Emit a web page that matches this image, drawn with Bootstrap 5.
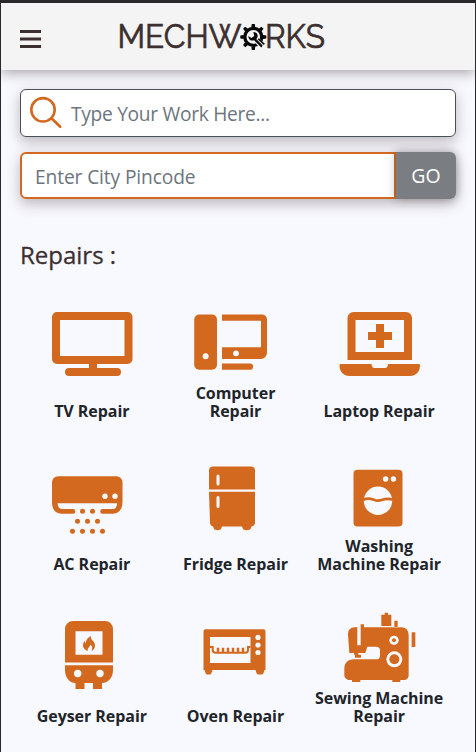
<!DOCTYPE html>
<html lang="en">
<head>
<meta charset="utf-8">
<meta name="viewport" content="width=device-width, initial-scale=1">
<title>Mechworks</title>
<link rel="stylesheet" href="https://cdn.jsdelivr.net/npm/bootstrap@5.3.0/dist/css/bootstrap.min.css">
<style>
:root{--brand:#d2691e;--ink:#3b2f2f}
body{font-family:"Open Sans","Noto Sans",sans-serif;background:#f8f9ff}
.app-frame{height:752px;border:solid #2a282a;border-width:3px 1px 0;overflow:hidden}
.top-bar{height:67px;background:#f4f4f4;box-shadow:0 3px 12px rgba(59,47,47,.42);padding:0 19px}
.menu-btn{line-height:0;margin-top:2px}
.logo-svg{margin-left:71px}
.logo-svg text{font-family:Raleway,Montserrat,Lato,sans-serif;font-size:33px;fill:var(--ink);stroke:var(--ink);stroke-width:.7}
.page-body{padding:19px 19px 0}
.soft-shadow{box-shadow:0 5px 14px rgba(59,47,47,.32)}
.search-box{height:48px;border:1px solid #495057;border-radius:6px;padding-left:9px}
.form-control,.form-control:focus{font-size:19.2px;box-shadow:none}
.form-control::placeholder{color:#6c757d}
.search-box .form-control{padding:2px 0 0 8px;letter-spacing:-.3px}
.pin-box{height:47px;margin-top:15px;border-radius:6px}
.pin-box .form-control{border:2px solid var(--brand);border-radius:6px 0 0 6px;padding:4px 13px 0;letter-spacing:-.12px}
.pin-box .go-btn{width:60px;background:#7a7d82;color:#fff;font-size:19.5px;border:0;border-radius:0 6px 6px 0;padding:0;margin-left:0!important;box-shadow:0 0 10px rgba(59,47,47,.4)}
.section-title{font-size:24px;line-height:30px;font-weight:500;color:var(--ink);margin:41px 0 30px;-webkit-text-stroke:.3px var(--ink)}
.service-grid{width:431px;row-gap:31.5px}
.service-grid svg{width:100px;height:85px;fill:var(--brand)}
.service-name{height:36px;line-height:18px;font-size:16px;font-weight:700;letter-spacing:-.05px;color:#212529;white-space:nowrap;margin-top:-1px;margin-bottom:1px}
</style>
</head>
<body>
<div class="app-frame">
<header class="top-bar d-flex align-items-center position-relative">
<button class="menu-btn btn p-0 border-0" aria-label="Menu"><svg width="21" height="22" fill="#3b2f2f"><path d="M0 3h21v3H0zM0 10.500h21v3H0zM0 18h21v3H0z"/></svg></button>
<svg class="logo-svg" width="220" height="46" viewBox="111 13.500 220 46" role="img" aria-label="Mechworks">
<text x="116.500" y="47.200" textLength="124" lengthAdjust="spacingAndGlyphs">MECHW</text>
<text x="264" y="47.200" textLength="60" lengthAdjust="spacingAndGlyphs">RKS</text>
<g transform="translate(252.300 36.400)"><circle r="8.500" fill="none" stroke="#080808" stroke-width="3.300"/>
<g fill="#080808"><path d="M-2-9.500-1.500-13h3L2-9.500z"/><path transform="rotate(45)" d="M-2-9.500-1.500-13h3L2-9.500z"/><path transform="rotate(90)" d="M-2-9.500-1.500-13h3L2-9.500z"/><path transform="rotate(135)" d="M-2-9.500-1.500-13h3L2-9.500z"/><path transform="rotate(180)" d="M-2-9.500-1.500-13h3L2-9.500z"/><path transform="rotate(225)" d="M-2-9.500-1.500-13h3L2-9.500z"/><path transform="rotate(270)" d="M-2-9.500-1.500-13h3L2-9.500z"/><path transform="rotate(315)" d="M-2-9.500-1.500-13h3L2-9.500z"/></g>
<path d="M2 2 10 10" stroke="#f4f4f4" stroke-width="6"/>
<path d="M5 2 11 7.500M1.500 3 8.500 10" fill="none" stroke="#080808" stroke-width="1.500"/><path d="M-5-1 -2 1 1-1 0-5C4-5 6-1 3 2 0 5-5 4-5-1Z" fill="#080808"/><path d="m2 2 7 7" stroke="#080808" stroke-width="1.200"/></g>
</svg>
</header>
<main class="page-body">
<div class="search-box soft-shadow bg-white d-flex align-items-center">
<svg class="flex-shrink-0" width="33" height="34" viewBox="29.500 96 33 34" fill="none" stroke="#d2691e" stroke-width="2.600" stroke-linecap="round"><circle cx="42.500" cy="109.800" r="11.700"/><path d="m51 118.300 8.700 8.500"/></svg>
<input class="form-control border-0 bg-transparent" type="text" placeholder="Type Your Work Here..." aria-label="Type of work">
</div>
<div class="pin-box input-group soft-shadow flex-nowrap">
<input class="form-control" type="text" placeholder="Enter City Pincode" aria-label="City pincode">
<button class="btn go-btn">GO</button>
</div>
<h1 class="section-title">Repairs :</h1>
<div class="service-grid row row-cols-3 gx-0">
<div class="col d-flex flex-column align-items-center"><svg viewBox="42 300 100 85"><path fill-rule="evenodd" d="M57 312h70.500a5 5 0 0 1 5 5v42a5 5 0 0 1-5 5H57a5 5 0 0 1-5-5v-42a5 5 0 0 1 5-5Zm3 8v36h64.500v-36Z"/><path d="M89 363h8v5h20a4 4 0 0 1 0 8H69a4 4 0 0 1 0-8h20Z"/></svg><div class="service-name d-flex align-items-end text-center">TV Repair</div></div>
<div class="col d-flex flex-column align-items-center"><svg viewBox="185 299.700 100 85"><rect x="194.200" y="314.300" width="22.800" height="55.200" rx="5"/><path fill-rule="evenodd" d="M222 314.300h40a5 5 0 0 1 5 5V353a6 6 0 0 1-6 5.600h-39V347h39v-26.500h-39Z"/><path d="M222 363.300h28a3.100 3.100 0 0 1 0 6.200h-28Z"/><g fill="#f8f9ff"><circle cx="205.600" cy="355.900" r="3"/><circle cx="236" cy="353" r="2.900"/></g></svg><div class="service-name d-flex align-items-end text-center">Computer<br>Repair</div></div>
<div class="col d-flex flex-column align-items-center"><svg viewBox="329 300 100 85"><path fill-rule="evenodd" d="M347.500 360v-42a6 6 0 0 1 6-6H406a6 6 0 0 1 6 6v42Zm8-40v32H404v-32Z"/><path d="M376 324h8v8h8v8h-8v8h-8v-8h-8v-8h8ZM341 364h30.500c0 2 1 4 3 4H385c2 0 3-2 3-4h30.500c1 0 1.500.5 1.500 1.500 0 6-4 10.500-10 10.500h-60.500c-6 0-10-4.500-10-10.500 0-1 .5-1.500 1.500-1.500Z"/></svg><div class="service-name d-flex align-items-end text-center">Laptop Repair</div></div>
<div class="col d-flex flex-column align-items-center"><svg viewBox="42 452.800 100 85"><path d="M58 476h58.500a6 6 0 0 1 6 6v20c0 7-4 11.500-9.500 11.500h-10.500a2.300 2.300 0 0 1 0-4.600h10c3 0 4-2 4.800-5.900H57.500c.5 3.900 2 5.900 5 5.900H73a2.300 2.300 0 0 1 0 4.600H61.500C55.500 513.500 52 509 52 502v-20a6 6 0 0 1 6-6Z"/><g fill="#f8f9ff"><circle cx="105" cy="496" r="2.700"/><circle cx="115" cy="496" r="2.700"/></g><path fill="none" stroke="#d2691e" stroke-width="5" stroke-linecap="round" d="M82.500 511h.01M92.500 511h.01M77.500 521h.01M87.500 521h.01M97.500 521h.01M72.500 531h.01M82.500 531h.01M92.500 531h.01M102.500 531h.01"/></svg><div class="service-name d-flex align-items-end text-center">AC Repair</div></div>
<div class="col d-flex flex-column align-items-center"><svg viewBox="185 452.500 100 85"><path d="M213 466h38a4 4 0 0 1 4 4v19h-46v-19a4 4 0 0 1 4-4ZM209 491.300h46V522c0 2-1 3.500-3.500 4l-1 2.500c-.5 1.500-7 1.500-7.500 0l-1-2.500h-20l-1 2.500c-.5 1.500-6.500 1.500-7 0l-1-2.500c-2-.5-3-2-3-4Z"/><path fill="none" stroke="#f8f9ff" stroke-width="3" stroke-linecap="round" d="M218 475.500v8M218 497v9"/></svg><div class="service-name d-flex align-items-end text-center">Fridge Repair</div></div>
<div class="col d-flex flex-column align-items-center"><svg viewBox="329 452.700 100 85"><rect x="353.500" y="469.500" width="49" height="56.700" rx="4"/><g fill="#f8f9ff"><circle cx="385.600" cy="478.700" r="2.700"/><circle cx="393.400" cy="478.700" r="2.700"/><circle cx="378" cy="500.500" r="14.200"/></g><path fill="none" stroke="#d2691e" stroke-width="2.600" d="M363 499.500c6-2.500 8-1 11.500.2 3.500 1.300 5.500.6 8-.3 4-1.400 6-1.400 10.500 0"/></svg><div class="service-name d-flex align-items-end text-center">Washing<br>Machine Repair</div></div>
<div class="col d-flex flex-column align-items-center"><svg viewBox="42 605 100 85"><path fill-rule="evenodd" d="M73 621h32a8 8 0 0 1 8 8v33.500H65V629a8 8 0 0 1 8-8Zm2.500 10.300v23.500h27v-23.500Z"/><path d="M65 665.200h48v5c0 8-5.500 12.800-11 12.800v6h-9v-6h-8.500v6h-9v-6C70 683 65 678 65 670.200Z"/><g fill="#f8f9ff"><circle cx="77.700" cy="673.500" r="3.700"/><circle cx="100" cy="673.500" r="3.700"/></g><path d="M91 636c-1 5 4 4 4 9.500 0 3-1.500 4.800-3.500 5.500 1.500-3 .5-5-1-6.500-.3 3-4 3.500-2.500 6.500-3-.8-5-2.700-5-5.500 0-2 .6-3 1.500-4.500l1.200 2.500c.3-4 2.300-6 5.300-7.500Z"/></svg><div class="service-name d-flex align-items-end text-center">Geyser Repair</div></div>
<div class="col d-flex flex-column align-items-center"><svg viewBox="185.500 605 100 85"><path fill-rule="evenodd" d="M205 629.300h59a2 2 0 0 1 2 2V670h-1l-1 3a2 2 0 0 1-2 1.500h-3a2 2 0 0 1-2-1.500l-1-3h-43l-1 3a2 2 0 0 1-2 1.500h-2a2 2 0 0 1-2-1.500l-1-3h-1v-38.700a2 2 0 0 1 2-2Zm5.500 7.700v26H251v-26Z"/><g fill="#f8f9ff"><circle cx="258.500" cy="637.400" r="2.600"/><circle cx="258.500" cy="645" r="2.600"/><circle cx="258.500" cy="652.500" r="2.600"/></g><path fill="none" stroke="#d2691e" stroke-width="2" d="M210.500 647h2.700v3c0 2 1 2.800 3 2.800h29.300c2 0 3-.8 3-2.800v-3h2.500"/><path fill="none" stroke="#d2691e" stroke-width="2.500" d="M218.500 647.700v5M223.500 647.700v5M228.500 647.700v5M233.500 647.700v5M238.500 647.700v5M243.500 647.700v5"/></svg><div class="service-name d-flex align-items-end text-center">Oven Repair</div></div>
<div class="col d-flex flex-column align-items-center"><svg viewBox="329 604.700 100 85"><g transform="translate(305 605) scale(.33333)"><path d="M157 66h-8c-13 0-20 9-20 22l4 55h14v5h3v9h18v-9h-8v-5h21l6-19h27c7 0 11 4 11 11v16c0 7-4 11-11 11h-68c-18 0-28 12-28 28v19c0 8 7 15 15 15h8v6h25v-6h96v6h24v-6h10c9 0 15-6 15-15V90c0-16-8-24-23-24H177v-9h-10v63h-10ZM229 28h10v-6h10v6h10v34h-30ZM268 46h10v21h-10ZM320 81h11v44h-11Z"/><circle cx="267" cy="105" r="14" fill="#f8f9ff"/><circle cx="267" cy="105" r="6"/><circle cx="268" cy="162" r="24" fill="#f8f9ff"/><circle cx="268" cy="162" r="15"/></g></svg><div class="service-name d-flex align-items-end text-center">Sewing Machine<br>Repair</div></div>
</div>
</main>
</div>
<script src="https://cdn.jsdelivr.net/npm/bootstrap@5.3.0/dist/js/bootstrap.bundle.min.js"></script>
</body>
</html>
